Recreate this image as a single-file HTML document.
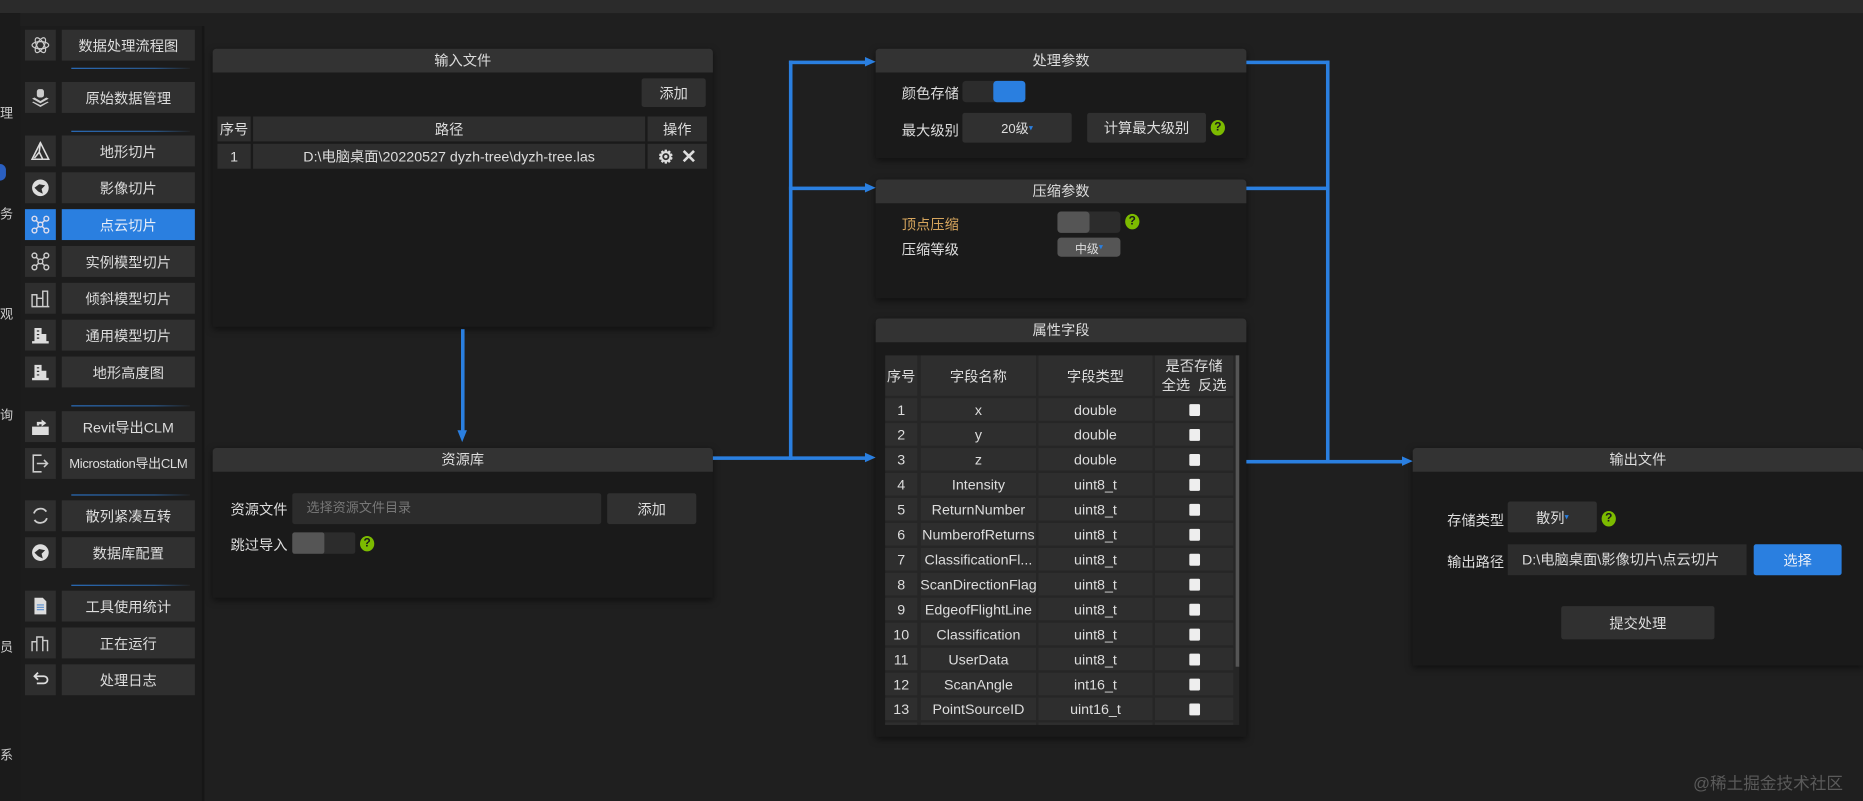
<!DOCTYPE html>
<html><head><meta charset="utf-8">
<style>
html,body{margin:0;padding:0;width:1863px;height:801px;overflow:hidden;background:#1f1f1f;}
#w{position:absolute;left:0;top:0;width:1568px;height:674px;transform:scale(1.18814,1.18843);transform-origin:0 0;font-family:"Liberation Sans","Noto Sans CJK SC",sans-serif;font-size:12px;color:#ddd;}
.a{position:absolute;box-sizing:border-box;}
.ib{background:#2e2e2e;display:flex;align-items:center;justify-content:center;}
.lb{background:#303030;display:flex;align-items:center;justify-content:center;font-size:12px;color:#ddd;white-space:nowrap;overflow:hidden;}
.sep{height:1px;background:linear-gradient(90deg,#2a6fc0,#2a5a90 70%,#222);}
.pn{background:#1a1a1a;box-shadow:0 2px 6px rgba(0,0,0,.5);border-radius:3px 3px 0 0;}
.hd{position:absolute;left:0;right:0;top:0;height:20px;background:#333;text-align:center;line-height:20px;font-size:12px;color:#ddd;border-radius:3px 3px 0 0;}
.c{position:absolute;background:#2e2e2e;display:flex;align-items:center;justify-content:center;font-size:12px;color:#ddd;white-space:nowrap;overflow:hidden;}
.bt{background:#303030;display:flex;align-items:center;justify-content:center;border-radius:2px;}
.q{position:absolute;width:12px;height:13px;border-radius:50%;background:#7cbb00;color:#1a1a1a;font-weight:bold;font-size:10px;text-align:center;line-height:13px;}
.ln{position:absolute;background:#2a7fe0;}
.ar{position:absolute;width:0;height:0;border-top:4px solid transparent;border-bottom:4px solid transparent;border-left:9px solid #2a7fe0;}
.cb{width:9px;height:10px;background:#eee;border-radius:1px;}
.lt{position:absolute;left:0;font-size:11px;color:#ccc;}
</style></head><body><div id="w">
<div class="a" style="left:0;top:0;width:1568px;height:11px;background:#2b2b2b"></div>
<div class="a" style="left:0;top:11px;width:17px;height:663px;background:#1b1b1b"></div>
<div class="a" style="left:17px;top:22px;width:153px;height:652px;background:#1c1c1c"></div>
<div class="a" style="left:170px;top:22px;width:2px;height:652px;background:#161616"></div>
<div class="lt" style="top:87px">理</div><div class="lt" style="top:172px">务</div><div class="lt" style="top:256px">观</div><div class="lt" style="top:341px">询</div><div class="lt" style="top:536px">员</div><div class="lt" style="top:627px">系</div>
<div class="a" style="left:0;top:138px;width:5px;height:14px;border-radius:0 7px 7px 0;background:#2a5fc0"></div>

<div class="a ib" style="left:21px;top:25px;width:26px;height:26px"><svg width="16" height="16" viewBox="0 0 16 16" fill="none" stroke="#ccc" stroke-width="1"><ellipse cx="8" cy="8" rx="7" ry="3"/><ellipse cx="8" cy="8" rx="7" ry="3" transform="rotate(60 8 8)"/><ellipse cx="8" cy="8" rx="7" ry="3" transform="rotate(120 8 8)"/></svg></div>
<div class="a lb" style="left:52px;top:25px;width:112px;height:26px">数据处理流程图</div>
<div class="a sep" style="left:60px;top:57px;width:100px"></div>
<div class="a ib" style="left:21px;top:69px;width:26px;height:26px"><svg width="16" height="16" viewBox="0 0 16 16" fill="#ccc"><rect x="5" y="1" width="6" height="7" rx="2"/><path d="M1 9l7 4 7-4-2-1-5 3-5-3z"/><path d="M1 12l7 4 7-4-1-.5-6 3-6-3z"/></svg></div>
<div class="a lb" style="left:52px;top:69px;width:112px;height:26px">原始数据管理</div>
<div class="a sep" style="left:60px;top:110px;width:100px"></div>
<div class="a ib" style="left:21px;top:114px;width:26px;height:26px"><svg width="16" height="16" viewBox="0 0 16 16" fill="none" stroke="#ddd" stroke-width="1.3"><path d="M8 1L1 15h14z M8 1l-1 8 3 6 M7 9l-4 5"/></svg></div>
<div class="a lb" style="left:52px;top:114px;width:112px;height:26px">地形切片</div>
<div class="a ib" style="left:21px;top:145px;width:26px;height:26px"><svg width="16" height="16" viewBox="0 0 16 16"><circle cx="8" cy="8" r="7" fill="#ddd"/><path d="M3 8l4-3 5 1-3 3 1 4-4-2z" fill="#2e2e2e"/></svg></div>
<div class="a lb" style="left:52px;top:145px;width:112px;height:26px">影像切片</div>
<div class="a ib" style="left:21px;top:176px;width:26px;height:26px;background:#2a7fe0"><svg width="16" height="16" viewBox="0 0 16 16" fill="none" stroke="#dde" stroke-width="1.2"><circle cx="3" cy="3" r="2"/><circle cx="13" cy="3" r="2"/><circle cx="3" cy="13" r="2"/><circle cx="13" cy="13" r="2"/><circle cx="8" cy="8" r="2"/><path d="M4.5 4.5l2 2M11.5 4.5l-2 2M4.5 11.5l2-2M11.5 11.5l-2-2"/></svg></div>
<div class="a lb" style="left:52px;top:176px;width:112px;height:26px;background:#2a7fe0;color:#e8eef8">点云切片</div>
<div class="a ib" style="left:21px;top:207px;width:26px;height:26px"><svg width="16" height="16" viewBox="0 0 16 16" fill="none" stroke="#ccc" stroke-width="1.2"><circle cx="3" cy="3" r="2"/><circle cx="13" cy="3" r="2"/><circle cx="3" cy="13" r="2"/><circle cx="13" cy="13" r="2"/><circle cx="8" cy="8" r="2"/><path d="M4.5 4.5l2 2M11.5 4.5l-2 2M4.5 11.5l2-2M11.5 11.5l-2-2"/></svg></div>
<div class="a lb" style="left:52px;top:207px;width:112px;height:26px">实例模型切片</div>
<div class="a ib" style="left:21px;top:238px;width:26px;height:26px"><svg width="16" height="16" viewBox="0 0 16 16" fill="none" stroke="#ccc" stroke-width="1.2"><path d="M1 15V5h4v10M5 15V8h5v7M10 15V2h4v13M0.5 15h15"/></svg></div>
<div class="a lb" style="left:52px;top:238px;width:112px;height:26px">倾斜模型切片</div>
<div class="a ib" style="left:21px;top:269px;width:26px;height:26px"><svg width="16" height="16" viewBox="0 0 16 16" fill="#ddd"><path d="M3 2h6v11H3z M9 7h4v6H9z M1 13h14v2H1z"/><path d="M5 4h2v1H5zM5 7h2v1H5zM5 10h2v1H5z" fill="#2e2e2e"/></svg></div>
<div class="a lb" style="left:52px;top:269px;width:112px;height:26px">通用模型切片</div>
<div class="a ib" style="left:21px;top:300px;width:26px;height:26px"><svg width="16" height="16" viewBox="0 0 16 16" fill="#ddd"><path d="M3 2h6v11H3z M9 7h4v6H9z M1 13h14v2H1z"/><path d="M5 4h2v1H5zM5 7h2v1H5zM5 10h2v1H5z" fill="#2e2e2e"/></svg></div>
<div class="a lb" style="left:52px;top:300px;width:112px;height:26px">地形高度图</div>
<div class="a sep" style="left:60px;top:341px;width:100px"></div>
<div class="a ib" style="left:21px;top:346px;width:26px;height:26px"><svg width="16" height="16" viewBox="0 0 16 16" fill="#ddd"><path d="M1 8h14v7H1z"/><path d="M5 7V4h4V2l4 3-4 3V6H7v1z"/></svg></div>
<div class="a lb" style="left:52px;top:346px;width:112px;height:26px">Revit导出CLM</div>
<div class="a ib" style="left:21px;top:377px;width:26px;height:26px"><svg width="16" height="16" viewBox="0 0 16 16" fill="none" stroke="#ccc" stroke-width="1.3"><path d="M9 1H2v14h7M5 8h9M11 5l3 3-3 3"/></svg></div>
<div class="a lb" style="left:52px;top:377px;width:112px;height:26px;font-size:11px;letter-spacing:-0.3px">Microstation导出CLM</div>
<div class="a sep" style="left:60px;top:416px;width:100px"></div>
<div class="a ib" style="left:21px;top:421px;width:26px;height:26px"><svg width="16" height="16" viewBox="0 0 16 16" fill="none" stroke="#ccc" stroke-width="1.5"><path d="M2.5 6A6 6 0 0 1 13 4.5M13.5 10A6 6 0 0 1 3 11.5"/></svg></div>
<div class="a lb" style="left:52px;top:421px;width:112px;height:26px">散列紧凑互转</div>
<div class="a ib" style="left:21px;top:452px;width:26px;height:26px"><svg width="16" height="16" viewBox="0 0 16 16"><circle cx="8" cy="8" r="7" fill="#ddd"/><path d="M3 8l4-3 5 1-3 3 1 4-4-2z" fill="#2e2e2e"/></svg></div>
<div class="a lb" style="left:52px;top:452px;width:112px;height:26px">数据库配置</div>
<div class="a sep" style="left:60px;top:492px;width:100px"></div>
<div class="a ib" style="left:21px;top:497px;width:26px;height:26px"><svg width="16" height="16" viewBox="0 0 16 16"><path d="M3 1h7l3 3v11H3z" fill="#ddd"/><path d="M5 7h6M5 9h6M5 11h6" stroke="#5a8fd0"/></svg></div>
<div class="a lb" style="left:52px;top:497px;width:112px;height:26px">工具使用统计</div>
<div class="a ib" style="left:21px;top:528px;width:26px;height:26px"><svg width="16" height="16" viewBox="0 0 16 16" fill="none" stroke="#ccc" stroke-width="1.2"><path d="M1 15V7h4v8M5 15V3h5v12M10 15V6h4v9"/></svg></div>
<div class="a lb" style="left:52px;top:528px;width:112px;height:26px">正在运行</div>
<div class="a ib" style="left:21px;top:559px;width:26px;height:26px"><svg width="16" height="16" viewBox="0 0 16 16" fill="none" stroke="#ddd" stroke-width="1.5"><path d="M4 5h7a3 3 0 0 1 0 6H5M6 2L3 5l3 3"/></svg></div>
<div class="a lb" style="left:52px;top:559px;width:112px;height:26px">处理日志</div>

<div class="a pn" style="left:179px;top:41px;width:421px;height:234px"><div class="hd">输入文件</div></div>
<div class="a bt" style="left:540px;top:66px;width:54px;height:24px">添加</div>
<div class="c" style="left:183px;top:98px;width:28px;height:21px">序号</div>
<div class="c" style="left:213px;top:98px;width:330px;height:21px">路径</div>
<div class="c" style="left:545px;top:98px;width:50px;height:21px">操作</div>
<div class="c" style="left:183px;top:121px;width:28px;height:21px">1</div>
<div class="c" style="left:213px;top:121px;width:330px;height:21px">D:\电脑桌面\20220527 dyzh-tree\dyzh-tree.las</div>
<div class="c" style="left:545px;top:121px;width:50px;height:21px;font-size:16px;font-weight:bold;gap:6px"><span style="font-size:15px">⚙</span><span>✕</span></div>

<div class="a pn" style="left:179px;top:377px;width:421px;height:126px"><div class="hd">资源库</div></div>
<div class="a" style="left:194px;top:420px">资源文件</div>
<div class="a" style="left:246px;top:415px;width:260px;height:26px;background:#2c2c2c;border-radius:2px;color:#777;font-size:11px;line-height:26px;padding-left:12px">选择资源文件目录</div>
<div class="a bt" style="left:511px;top:415px;width:75px;height:26px">添加</div>
<div class="a" style="left:194px;top:450px">跳过导入</div>
<div class="a" style="left:246px;top:448px;width:53px;height:18px;background:#2c2c2c;border-radius:2px"><div style="width:27px;height:18px;background:#555;border-radius:2px"></div></div>
<div class="q" style="left:303px;top:451px">?</div>

<div class="a pn" style="left:737px;top:41px;width:312px;height:92px"><div class="hd">处理参数</div></div>
<div class="a" style="left:759px;top:70px">颜色存储</div>
<div class="a" style="left:810px;top:68px;width:53px;height:18px;background:#2c2c2c;border-radius:3px"><div style="position:absolute;right:0;width:27px;height:18px;background:#2a7fe0;border-radius:3px"></div></div>
<div class="a" style="left:759px;top:101px">最大级别</div>
<div class="a bt" style="left:810px;top:95px;width:92px;height:25px;font-size:11px">20级<span style="color:#2a7fe0;font-size:7px">▾</span></div>
<div class="a bt" style="left:915px;top:95px;width:100px;height:25px">计算最大级别</div>
<div class="q" style="left:1019px;top:101px">?</div>

<div class="a pn" style="left:737px;top:151px;width:312px;height:100px"><div class="hd">压缩参数</div></div>
<div class="a" style="left:759px;top:180px;color:#d6a55d">顶点压缩</div>
<div class="a" style="left:890px;top:178px;width:53px;height:18px;background:#2c2c2c;border-radius:3px"><div style="width:27px;height:18px;background:#555;border-radius:3px"></div></div>
<div class="q" style="left:947px;top:180px">?</div>
<div class="a" style="left:759px;top:201px">压缩等级</div>
<div class="a bt" style="left:890px;top:200px;width:53px;height:16px;background:#555;font-size:10px;border-radius:3px">中级<span style="color:#2a7fe0;font-size:7px">▾</span></div>

<div class="a pn" style="left:737px;top:268px;width:312px;height:352px"><div class="hd">属性字段</div></div>
<div class="a" style="left:745px;top:299px;width:298px;height:311px;background:#262626;overflow:hidden">
<div class="c" style="left:0;top:0;width:27px;height:34px">序号</div>
<div class="c" style="left:30px;top:0;width:97px;height:34px">字段名称</div>
<div class="c" style="left:129px;top:0;width:96px;height:34px">字段类型</div>
<div class="c" style="left:227px;top:0;width:66px;height:34px;flex-direction:column;line-height:16px">是否存储<span>全选&nbsp;&nbsp;反选</span></div>
</div>
<div class="a" style="left:1040px;top:299px;width:3px;height:262px;background:#555"></div>
<div id="rows"></div>

<div class="a pn" style="left:1189px;top:377px;width:379px;height:183px"><div class="hd">输出文件</div></div>
<div class="a" style="left:1218px;top:429px">存储类型</div>
<div class="a bt" style="left:1269px;top:422px;width:75px;height:26px">散列<span style="color:#2a7fe0;font-size:7px">▾</span></div>
<div class="q" style="left:1348px;top:430px">?</div>
<div class="a" style="left:1218px;top:464px">输出路径</div>
<div class="a" style="left:1269px;top:458px;width:201px;height:26px;background:#2c2c2c;line-height:26px;padding-left:12px;white-space:nowrap">D:\电脑桌面\影像切片\点云切片</div>
<div class="a bt" style="left:1476px;top:458px;width:74px;height:26px;background:#2a7fe0;color:#e8eef8">选择</div>
<div class="a bt" style="left:1314px;top:510px;width:129px;height:28px">提交处理</div>

<div class="ln" style="left:388px;top:277px;width:3px;height:90px"></div>
<div class="a" style="left:385px;top:362px;width:0;height:0;border-left:4.5px solid transparent;border-right:4.5px solid transparent;border-top:10px solid #2a7fe0"></div>
<div class="ln" style="left:600px;top:384px;width:66px;height:3px"></div>
<div class="ln" style="left:664px;top:51px;width:3px;height:336px"></div>
<div class="ln" style="left:664px;top:51px;width:66px;height:3px"></div><div class="ar" style="left:728px;top:48px"></div>
<div class="ln" style="left:664px;top:157px;width:66px;height:3px"></div><div class="ar" style="left:728px;top:154px"></div>
<div class="ln" style="left:664px;top:384px;width:66px;height:3px"></div><div class="ar" style="left:728px;top:381px"></div>
<div class="ln" style="left:1049px;top:51px;width:70px;height:3px"></div>
<div class="ln" style="left:1049px;top:157px;width:70px;height:3px"></div>
<div class="ln" style="left:1049px;top:387px;width:132px;height:3px"></div>
<div class="ln" style="left:1116px;top:51px;width:3px;height:339px"></div>
<div class="ar" style="left:1180px;top:384px"></div>

<div class="a" style="left:1425px;top:649px;color:#5a5a5a;font-size:14px">@稀土掘金技术社区</div>
</div>
<script>
var d=[["1","x","double"],["2","y","double"],["3","z","double"],["4","Intensity","uint8_t"],["5","ReturnNumber","uint8_t"],["6","NumberofReturns","uint8_t"],["7","ClassificationFl...","uint8_t"],["8","ScanDirectionFlag","uint8_t"],["9","EdgeofFlightLine","uint8_t"],["10","Classification","uint8_t"],["11","UserData","uint8_t"],["12","ScanAngle","int16_t"],["13","PointSourceID","uint16_t"]];
var h="";d.forEach(function(r,i){var t=335+i*21;
h+='<div class="c" style="left:745px;top:'+t+'px;width:27px;height:19px">'+r[0]+'</div>'+
'<div class="c" style="left:775px;top:'+t+'px;width:97px;height:19px">'+r[1]+'</div>'+
'<div class="c" style="left:874px;top:'+t+'px;width:96px;height:19px">'+r[2]+'</div>'+
'<div class="c" style="left:972px;top:'+t+'px;width:66px;height:19px"><div class="cb"></div></div>';});
h+='<div class="c" style="left:745px;top:608px;width:27px;height:2px"></div><div class="c" style="left:775px;top:608px;width:97px;height:2px"></div><div class="c" style="left:874px;top:608px;width:96px;height:2px"></div><div class="c" style="left:972px;top:608px;width:66px;height:2px"></div>';
document.getElementById("rows").outerHTML=h;
</script>
</body></html>
